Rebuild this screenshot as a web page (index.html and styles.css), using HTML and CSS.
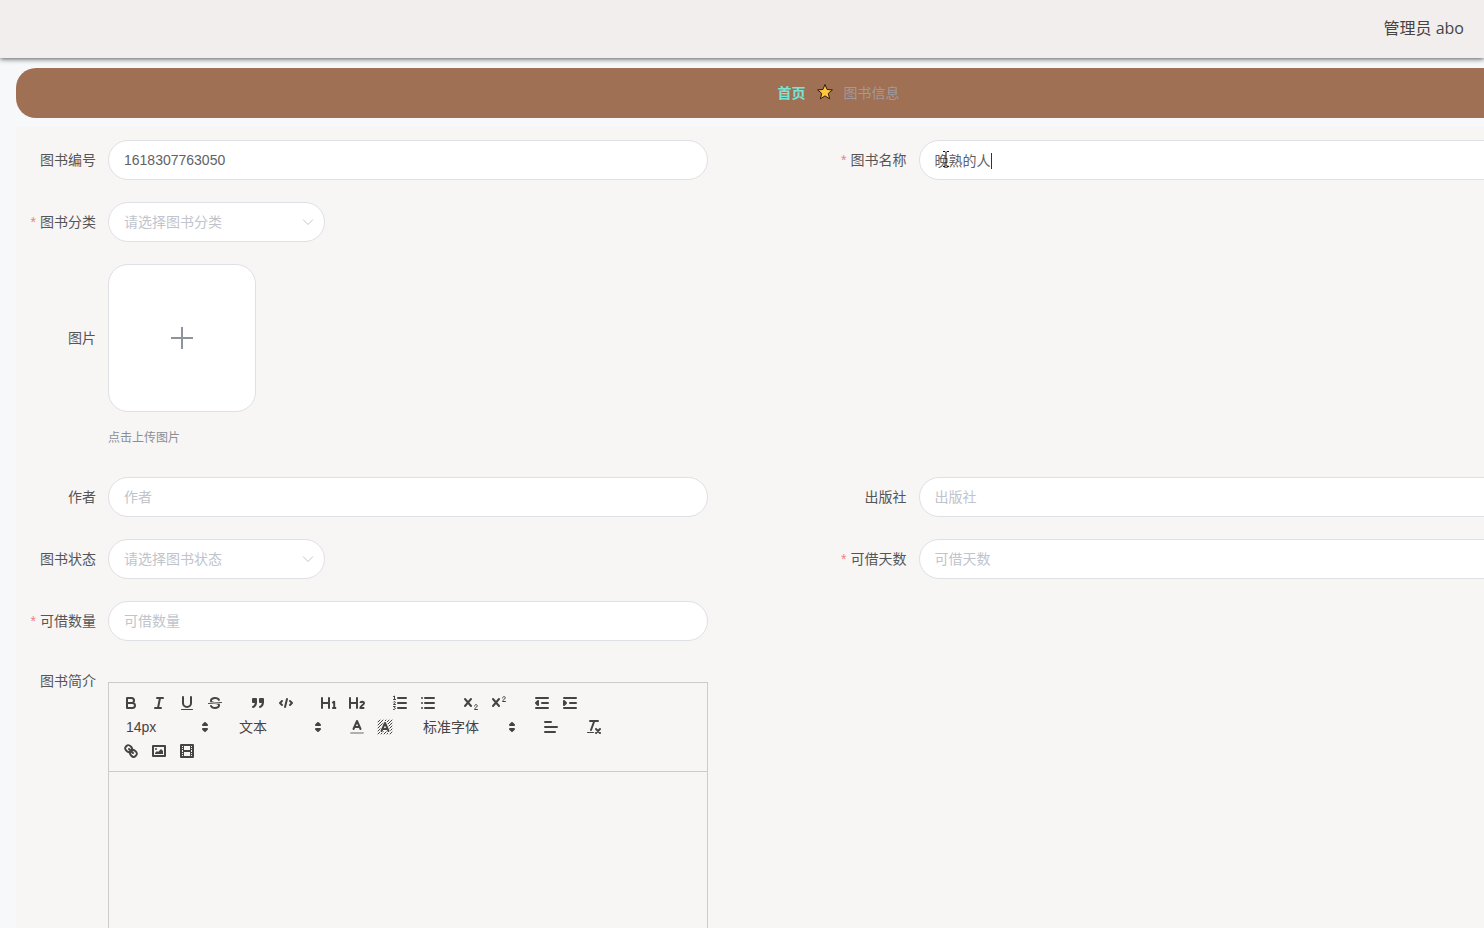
FILE: index.html
```html
<!DOCTYPE html>
<html lang="zh-CN">
<head>
<meta charset="utf-8">
<title>图书信息</title>
<link rel="stylesheet" href="styles.css">
</head>
<body>
<header class="topbar"><span>管理员 abo</span></header>
<main class="content">
  <nav class="breadcrumb" aria-label="导航">
    <a href="#home">首页</a>
    <svg class="star" viewBox="0 0 18 18"><path d="M9 1.500l2.100 5 5.300.4-4.100 3.500 1.300 5.400L9 12.900l-4.600 2.900 1.300-5.400L1.600 6.900l5.300-.4z"/></svg>
    <span>图书信息</span>
  </nav>
  <form class="panel">
    <div class="item">
      <label class="label" for="code">图书编号</label>
      <input class="field" id="code" value="1618307763050" readonly>
    </div>
    <div class="item">
      <label class="label required" for="name">图书名称</label>
      <div class="field-wrap">
        <input class="field" id="name" value="晚熟的人">
        <span class="caret"></span>
        <svg class="pointer" viewBox="0 0 8 18"><path d="M1 1.500h2l1 1 1-1h2M4 2.500v13M1 16.500h2l1-1 1 1h2"/></svg>
      </div>
    </div>
    <div class="item wide">
      <label class="label required" for="kind">图书分类</label>
      <div class="select-wrap">
        <select class="field" id="kind"><option>请选择图书分类</option></select>
        <svg class="chevron" viewBox="0 0 12 12"><path d="M1 3.500l5 5 5-5"/></svg>
      </div>
    </div>
    <div class="item wide">
      <label class="label tall" for="upload">图片</label>
      <div>
        <button class="upload" id="upload" type="button" aria-label="上传图片"><svg viewBox="0 0 24 24"><path d="M12 1v22M1 12h22"/></svg></button>
        <div class="hint">点击上传图片</div>
      </div>
    </div>
    <div class="item">
      <label class="label" for="author">作者</label>
      <input class="field" id="author" placeholder="作者">
    </div>
    <div class="item">
      <label class="label" for="press">出版社</label>
      <input class="field" id="press" placeholder="出版社">
    </div>
    <div class="item">
      <label class="label" for="state">图书状态</label>
      <div class="select-wrap">
        <select class="field" id="state"><option>请选择图书状态</option></select>
        <svg class="chevron" viewBox="0 0 12 12"><path d="M1 3.500l5 5 5-5"/></svg>
      </div>
    </div>
    <div class="item">
      <label class="label required" for="days">可借天数</label>
      <input class="field" id="days" placeholder="可借天数">
    </div>
    <div class="item wide">
      <label class="label required" for="count">可借数量</label>
      <input class="field" id="count" placeholder="可借数量">
    </div>
    <div class="item wide">
      <label class="label short" for="intro">图书简介</label>
      <div class="editor">
        <div class="toolbar">
          <div class="group">
            <button type="button" class="tool" aria-label="粗体"><svg viewBox="0 0 18 18"><path d="M5 4h4.500a2.500 2.500 0 0 1 0 5H5zM5 9h5.500a2.500 2.500 0 0 1 0 5H5z"/></svg></button>
            <button type="button" class="tool" aria-label="斜体"><svg viewBox="0 0 18 18"><path d="M7 4h6M5 14h6M8 14l2-10"/></svg></button>
            <button type="button" class="tool" aria-label="下划线"><svg viewBox="0 0 18 18"><path d="M5 3v6a4 4 0 0 0 8 0V3"/><rect class="fill" x="3" y="15" width="12" height="1" rx=".5"/></svg></button>
            <button type="button" class="tool" aria-label="删除线"><svg viewBox="0 0 18 18"><path class="thin" d="M15.500 8.500l-13 1"/><path class="fill" d="M9 8C6.500 7.800 6 7.500 6 6.500 6 5.800 7.300 5 9 5c1.600 0 2.800.7 3 1.300a1 1 0 0 0 1.900-.6C13.400 4.100 11.400 3 9 3 6.200 3 4 4.500 4 6.500a3.200 3.200 0 0 0 .5 1.800zM9 10c2.500.2 3 .5 3 1.500 0 .7-1.300 1.500-3 1.500-1.600 0-2.800-.7-3-1.300a1 1 0 1 0-1.900.6C4.600 13.900 6.600 15 9 15c2.800 0 5-1.500 5-3.500a3.200 3.200 0 0 0-.5-1.800z"/></svg></button>
          </div>
          <div class="group">
            <button type="button" class="tool" aria-label="引用"><svg viewBox="0 0 18 18"><g class="solid"><rect x="4" y="5" width="3" height="3"/><rect x="11" y="5" width="3" height="3"/><path d="M7 8c0 4-3 5-3 5M14 8c0 4-3 5-3 5"/></g></svg></button>
            <button type="button" class="tool" aria-label="代码"><svg viewBox="0 0 18 18"><path d="M5 7L3 9l2 2M13 7l2 2-2 2M10 5L8 13"/></svg></button>
          </div>
          <div class="group">
            <button type="button" class="tool" aria-label="标题1"><svg viewBox="0 0 18 18"><path d="M2 4v10M9 4v10M2 9h7"/><path class="mid" d="M12.300 9l1.900-1.300V14M12.200 14h4"/></svg></button>
            <button type="button" class="tool" aria-label="标题2"><svg viewBox="0 0 18 18"><path d="M2 4v10M9 4v10M2 9h7"/><path class="mid" d="M12.300 9c.3-1.800 3.700-1.800 3.700.2 0 1.700-3.600 2.600-3.700 4.800h4"/></svg></button>
          </div>
          <div class="group">
            <button type="button" class="tool" aria-label="有序列表"><svg viewBox="0 0 18 18"><path d="M7 4h8M7 9h8M7 14h8"/><path class="thin" d="M2.500 2.500l1-.5v3.500M2.500 5.500h2M2.500 8c.5-1 2-.5 1.800.4L2.500 10.500h2M2.500 12.500h1.800l-.8 1.300c1.500 0 1 1.900-1 1.700"/></svg></button>
            <button type="button" class="tool" aria-label="无序列表"><svg viewBox="0 0 18 18"><path d="M6 4h9M6 9h9M6 14h9M3 4h0M3 9h0M3 14h0"/></svg></button>
          </div>
          <div class="group">
            <button type="button" class="tool" aria-label="下标"><svg viewBox="0 0 18 18"><path d="M3 5l6 7M9 5l-6 7"/><path class="thin" d="M12.500 12c.2-2 3-1.800 2.800 0-.2 1.300-2.700 1.800-2.800 3.500h3"/></svg></button>
            <button type="button" class="tool" aria-label="上标"><svg viewBox="0 0 18 18"><path d="M3 5l6 7M9 5l-6 7"/><path class="thin" d="M12.500 4c.2-2 3-1.800 2.800 0-.2 1.300-2.700 1.800-2.800 3.500h3"/></svg></button>
          </div>
          <div class="group">
            <button type="button" class="tool" aria-label="减少缩进"><svg viewBox="0 0 18 18"><path d="M3 14h12M3 4h12M9 9h6"/><path class="solid" d="M5 7v4L3 9z"/></svg></button>
            <button type="button" class="tool" aria-label="增加缩进"><svg viewBox="0 0 18 18"><path d="M3 14h12M3 4h12M9 9h6"/><path class="solid" d="M3 7v4l2-2z"/></svg></button>
          </div>
          <div class="group">
            <div class="picker"><select aria-label="字号"><option>14px</option></select><svg viewBox="0 0 18 18"><path class="solid" d="M7 11l2 2 2-2zM7 7l2-2 2 2z"/></svg></div>
          </div>
          <div class="group">
            <div class="picker"><select aria-label="标题"><option>文本</option></select><svg viewBox="0 0 18 18"><path class="solid" d="M7 11l2 2 2-2zM7 7l2-2 2 2z"/></svg></div>
          </div>
          <div class="group">
            <button type="button" class="tool" aria-label="文字颜色"><svg viewBox="0 0 18 18"><path class="faint" d="M3 15h12"/><path d="M5.500 11L9 3l3.500 8M11.600 9H6.400"/></svg></button>
            <button type="button" class="tool" aria-label="背景颜色"><svg viewBox="0 0 18 18"><path class="hatch" d="M2 4l2-2M2 7l5-5M2 10l8-8M2 13l11-11M2 16L16 2M5 16L16 5M8 16l8-8M11 16l5-5M14 16l2-2"/><path class="halo" d="M5.500 13L9 5l3.500 8M11.600 11H6.400"/><path d="M5.500 13L9 5l3.500 8M11.600 11H6.400"/></svg></button>
          </div>
          <div class="group">
            <div class="picker font"><select aria-label="字体"><option>标准字体</option></select><svg viewBox="0 0 18 18"><path class="solid" d="M7 11l2 2 2-2zM7 7l2-2 2 2z"/></svg></div>
          </div>
          <div class="group">
            <button type="button" class="tool" aria-label="对齐"><svg viewBox="0 0 18 18"><path d="M3 9h12M3 14h10M3 4h6"/></svg></button>
          </div>
          <div class="group">
            <button type="button" class="tool" aria-label="清除格式"><svg viewBox="0 0 18 18"><path d="M5 3h8M6 12l3.300-9M11 11l4 4M15 11l-4 4"/><rect class="fill" x="2" y="14" width="7" height="1" rx=".5"/></svg></button>
          </div>
          <div class="group">
            <button type="button" class="tool" aria-label="链接"><svg viewBox="0 0 18 18"><path d="M7 7l4 4M8.900 4.577a3.476 3.476 0 0 1 .36 4.679A3.476 3.476 0 0 1 4.577 8.900C3.185 7.500 2.035 6.400 4.217 4.217S7.500 3.185 8.900 4.577zM13.423 9.100a3.476 3.476 0 0 0-4.679-.36 3.476 3.476 0 0 0 .36 4.679c1.392 1.392 2.500 2.542 4.679.36S14.815 10.500 13.423 9.100z"/></svg></button>
            <button type="button" class="tool" aria-label="图片"><svg viewBox="0 0 18 18"><rect x="3" y="4" width="12" height="10"/><circle class="fill" cx="6" cy="7" r="1"/><path class="fill" d="M5 12v-1l2-2 1 1 3-3 2 2v3z"/></svg></button>
            <button type="button" class="tool" aria-label="视频"><svg viewBox="0 0 18 18"><rect x="3" y="3" width="12" height="12"/><path class="fill" d="M5 3h1v12H5zM12 3h1v12h-1zM5 8h8v2H5zM3 5h3v1H3zM3 7h3v1H3zM3 10h3v1H3zM3 12h3v1H3zM12 5h3v1h-3zM12 7h3v1h-3zM12 10h3v1h-3zM12 12h3v1h-3z"/></svg></button>
          </div>
        </div>
        <textarea class="editor-body" id="intro"></textarea>
      </div>
    </div>
  </form>
</main>
</body>
</html>
```
FILE: styles.css
```css
* { box-sizing: border-box; }
body {
  margin: 0;
  height: 100vh;
  overflow: hidden;
  background: #f6f8fa;
  color: #555;
  font: 14px "Liberation Sans", "Noto Sans CJK SC", sans-serif;
}
input, select, button, textarea { font: inherit; color: inherit; margin: 0; }
.topbar {
  position: relative;
  display: flex;
  align-items: center;
  justify-content: flex-end;
  height: 58px;
  padding: 0 20px 4px;
  background: #f3eeee;
  box-shadow: 0 1px 5px #555;
  color: #444;
  font: 16px "Open Sans", "Noto Sans CJK SC", sans-serif;
}
.content { margin: 10px -177px 0 16px; }
.breadcrumb {
  display: flex;
  align-items: center;
  justify-content: center;
  gap: 10px;
  height: 50px;
  padding-bottom: 2px;
  border-radius: 20px;
  background: #9f7054;
  color: #a09a9f;
}
.breadcrumb a { color: #78e4d7; font-weight: 700; text-decoration: none; }
.star { width: 18px; height: 18px; fill: #ffc83d; stroke: #2b1b12; stroke-width: 1; stroke-linejoin: round; }
.panel {
  display: grid;
  grid-template-columns: 1fr 1fr;
  row-gap: 22px;
  margin-top: 9px;
  padding: 13px 12px;
  background: #f8f5f5;
}
.item { display: flex; align-items: flex-start; }
.wide { grid-column: 1 / -1; }
.label {
  flex: none;
  width: 80px;
  padding-right: 12px;
  line-height: 40px;
  text-align: right;
  white-space: nowrap;
}
.tall { line-height: 148px; }
.short { line-height: 36px; }
.required::before { content: "*"; margin-right: 4px; color: #f08080; }
.item:has(.required) .label { margin-left: -20px; width: 100px; }
.field {
  display: block;
  width: 600px;
  height: 40px;
  padding: 0 15px;
  border: 1px solid #dfe0e5;
  border-radius: 20px;
  outline: 0;
  background: #fff;
  color: #606266;
}
.field::placeholder { color: #c0c4cc; opacity: 1; }
.field-wrap, .select-wrap { position: relative; }
select { appearance: none; }
.select-wrap .field { width: 217px; color: #c0c4cc; }
.chevron {
  position: absolute;
  top: 14px;
  right: 11px;
  width: 12px;
  height: 12px;
  fill: none;
  stroke: #c0c4cc;
  pointer-events: none;
}
.caret { position: absolute; left: 72px; top: 13px; width: 1px; height: 16px; background: #333; }
.pointer { position: absolute; left: 23px; top: 10px; width: 8px; height: 18px; fill: none; stroke: #111; pointer-events: none; }
.upload {
  display: grid;
  place-items: center;
  width: 148px;
  height: 148px;
  padding: 0;
  border: 1px solid #dfe0e5;
  border-radius: 20px;
  background: #fff;
}
.upload svg { width: 24px; height: 24px; fill: none; stroke: #8c939d; stroke-width: 2; }
.hint { padding-top: 9px; line-height: 34px; font-size: 12px; color: #8a8f96; }
.editor { width: 600px; margin-top: 19px; border: 1px solid #ccc; }
.toolbar { display: flex; flex-wrap: wrap; padding: 8px; border-bottom: 1px solid #ccc; }
.group { display: flex; margin-right: 15px; }
.tool { width: 28px; height: 24px; padding: 3px 5px; border: 0; background: none; }
.tool svg, .picker svg { display: block; width: 18px; height: 18px; fill: none; stroke: #444; stroke-width: 2; stroke-linecap: round; stroke-linejoin: round; }
svg .fill { fill: #444; stroke: none; }
svg .solid { fill: #444; }
svg .thin { stroke-width: 1; }
svg .mid { stroke-width: 2; stroke-linecap: butt; }
svg .faint { opacity: .4; }
svg .hatch { stroke-width: 1; }
svg .halo { stroke: #f8f5f5; stroke-width: 4; }
.picker { position: relative; width: 98px; height: 24px; color: #444; }
.picker.font { width: 108px; }
.picker select { display: block; width: 100%; height: 24px; padding: 0 9px; border: 0; background: none; }
.picker svg { position: absolute; top: 3px; right: 1px; pointer-events: none; }
.editor-body { display: block; width: 100%; height: 400px; padding: 12px 15px; border: 0; outline: 0; background: none; resize: none; }
```
